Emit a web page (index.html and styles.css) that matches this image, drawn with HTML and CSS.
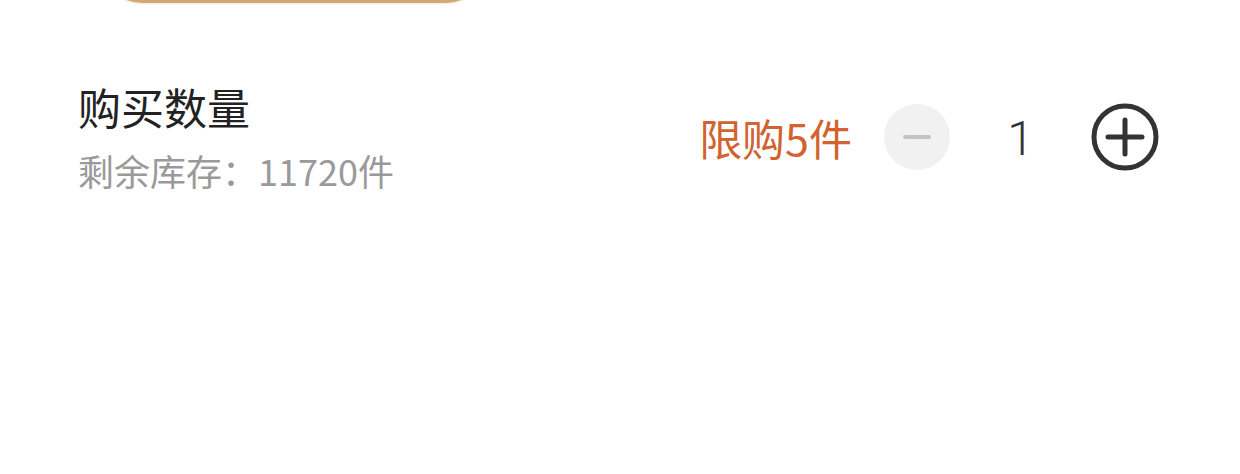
FILE: index.html
```html
<!DOCTYPE html>
<html lang="zh-CN">
<head>
<meta charset="utf-8">
<title>购买数量</title>
<link rel="stylesheet" href="styles.css">
</head>
<body>
<div class="page">
  <div class="top-btn"></div>
  <div class="qty-row">
    <div class="qty-info">
      <div class="qty-title">购买数量</div>
      <div class="qty-stock">剩余库存：11720件</div>
    </div>
    <div class="qty-control">
      <span class="qty-limit">限购5件</span>
      <span class="step step-minus">
        <svg width="66" height="66" viewBox="0 0 66 66"><circle cx="33" cy="33" r="33" fill="#f1f1f1"/><line x1="21" y1="33" x2="45" y2="33" stroke="#c4c4c4" stroke-width="4" stroke-linecap="round"/></svg>
      </span>
      <span class="qty-num">1</span>
      <span class="step step-plus">
        <svg width="68" height="68" viewBox="0 0 68 68"><circle cx="34" cy="34" r="31" fill="none" stroke="#333" stroke-width="5"/><line x1="17" y1="34" x2="51" y2="34" stroke="#333" stroke-width="5" stroke-linecap="round"/><line x1="34" y1="17" x2="34" y2="51" stroke="#333" stroke-width="5" stroke-linecap="round"/></svg>
      </span>
    </div>
  </div>
</div>
</body>
</html>
```
FILE: styles.css
```css
html, body {
  margin: 0;
  padding: 0;
  background: #ffffff;
}
body {
  width: 1240px;
  height: 474px;
  overflow: hidden;
  font-family: "Noto Sans CJK SC", "Noto Sans", sans-serif;
}
.page {
  display: flex;
  flex-direction: column;
}
.top-btn {
  width: 384px;
  height: 80px;
  margin-top: -77px;
  margin-left: 102px;
  border-radius: 40px;
  background: #d0aa72;
  box-shadow: 0 1px 2px rgba(214, 170, 110, 0.3);
}
.qty-row {
  display: flex;
  align-items: center;
  justify-content: space-between;
  padding: 0 81px 0 78px;
  margin-top: 78px;
}
.qty-info {
  display: flex;
  flex-direction: column;
  gap: 17px;
}
.qty-title {
  font-size: 43px;
  line-height: 50px;
  color: #222222;
}
.qty-stock {
  font-size: 36px;
  line-height: 44px;
  color: #9a9a9a;
}
.qty-control {
  display: flex;
  align-items: center;
}
.qty-limit {
  font-size: 43px;
  line-height: 50px;
  color: #d2622f;
  margin-right: 32px;
}
.step {
  display: flex;
}
.qty-num {
  width: 141px;
  text-align: center;
  font-family: Roboto, "Noto Sans", sans-serif;
  font-size: 48px;
  line-height: 58px;
  font-weight: 300;
  color: #333333;
  padding-top: 4px;
}
```
